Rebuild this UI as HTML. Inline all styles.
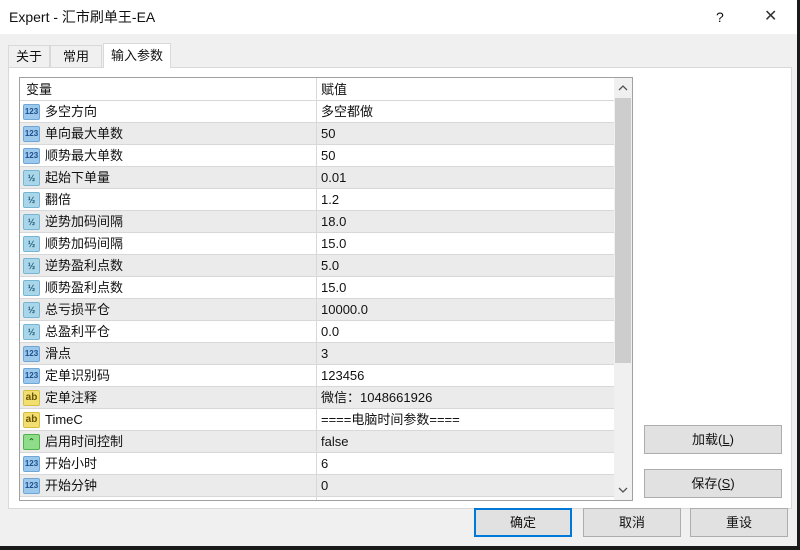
<!DOCTYPE html>
<html><head><meta charset="utf-8"><style>
*{box-sizing:border-box;margin:0;padding:0}
body{width:800px;height:550px;background:#1a1a1a;font-family:"Liberation Sans","Noto Sans CJK SC",sans-serif;font-size:13px;color:#111;position:relative;overflow:hidden}
.win{position:absolute;left:0;top:0;width:797px;height:546px;background:#f0f0f0}
.title{position:absolute;left:0;top:0;width:797px;height:34px;background:#fff}
.title span{position:absolute;top:0;line-height:34px}
.title .t{left:9px;font-size:14px}
.title .q{left:716px;font-size:14px}
.title .x{left:764px;font-size:16px;color:#333}
.tab{position:absolute;top:45px;height:22px;font-size:13px;line-height:21px;text-align:center;border:1px solid #d9d9d9;border-bottom:none;background:#f0f0f0}
.panel{position:absolute;left:8px;top:67px;width:784px;height:442px;background:#fff;border:1px solid #d9d9d9}
.list{position:absolute;left:19px;top:77px;width:614px;height:424px;border:1px solid #a0a0a0;background:#fff;overflow:hidden}
.row{position:absolute;left:0;width:594px;height:22px;border-bottom:1px solid #d8d8d8}
.row.g{background:#ebebeb}
.row span{position:absolute;top:0;line-height:21px;white-space:nowrap}
.n{left:25px}.v{left:301px}
.div{position:absolute;left:296px;top:0;width:1px;height:424px;background:#d8d8d8}
.ic{position:absolute;left:3px;top:3px;width:17px;height:16px;border-radius:2px;font-size:8px;font-weight:bold;font-style:normal;line-height:14px;text-align:center;font-family:"Liberation Sans",sans-serif}
.i1{background:#9cc8ec;color:#1d4f8c;border:1px solid #6fa6d8}
.i2{background:#a9d6e8;color:#1d5a7a;border:1px solid #76b6d2;font-size:9px}
.i3{background:#f1df72;color:#6a5200;border:1px solid #d6be3e;font-size:10px}
.i4{background:#8fdc8a;color:#1a7a1a;border:1px solid #4fb34a}
.sb{position:absolute;left:594px;top:0;width:18px;height:422px;background:#f0f0f0}
.thumb{position:absolute;left:1px;top:20px;width:16px;height:265px;background:#cdcdcd}
.btn{position:absolute;height:29px;background:#e1e1e1;border:1px solid #adadad;text-align:center;line-height:27px;font-size:13px}
</style></head><body><div class="win">
<div class="title"><span class="t">Expert - 汇市刷单王-EA</span><span class="q">?</span><span class="x">✕</span></div>
<div class="tab" style="left:8px;width:42px">关于</div>
<div class="tab" style="left:50px;width:52px">常用</div>
<div class="tab" style="left:103px;top:43px;height:25px;width:68px;background:#fff;z-index:2;line-height:24px">输入参数</div>
<div class="panel"></div>
<div class="list">
<div class="row" style="top:0;height:23px"><span style="left:6px;line-height:23px">变量</span><span class="v" style="line-height:23px">赋值</span></div>
<div class="row" style="top:23px"><i class="ic i1">123</i><span class="n">多空方向</span><span class="v">多空都做</span></div>
<div class="row g" style="top:45px"><i class="ic i1">123</i><span class="n">单向最大单数</span><span class="v">50</span></div>
<div class="row" style="top:67px"><i class="ic i1">123</i><span class="n">顺势最大单数</span><span class="v">50</span></div>
<div class="row g" style="top:89px"><i class="ic i2">½</i><span class="n">起始下单量</span><span class="v">0.01</span></div>
<div class="row" style="top:111px"><i class="ic i2">½</i><span class="n">翻倍</span><span class="v">1.2</span></div>
<div class="row g" style="top:133px"><i class="ic i2">½</i><span class="n">逆势加码间隔</span><span class="v">18.0</span></div>
<div class="row" style="top:155px"><i class="ic i2">½</i><span class="n">顺势加码间隔</span><span class="v">15.0</span></div>
<div class="row g" style="top:177px"><i class="ic i2">½</i><span class="n">逆势盈利点数</span><span class="v">5.0</span></div>
<div class="row" style="top:199px"><i class="ic i2">½</i><span class="n">顺势盈利点数</span><span class="v">15.0</span></div>
<div class="row g" style="top:221px"><i class="ic i2">½</i><span class="n">总亏损平仓</span><span class="v">10000.0</span></div>
<div class="row" style="top:243px"><i class="ic i2">½</i><span class="n">总盈利平仓</span><span class="v">0.0</span></div>
<div class="row g" style="top:265px"><i class="ic i1">123</i><span class="n">滑点</span><span class="v">3</span></div>
<div class="row" style="top:287px"><i class="ic i1">123</i><span class="n">定单识别码</span><span class="v">123456</span></div>
<div class="row g" style="top:309px"><i class="ic i3">ab</i><span class="n">定单注释</span><span class="v">微信：1048661926</span></div>
<div class="row" style="top:331px"><i class="ic i3">ab</i><span class="n">TimeC</span><span class="v">====电脑时间参数====</span></div>
<div class="row g" style="top:353px"><i class="ic i4">⌃</i><span class="n">启用时间控制</span><span class="v">false</span></div>
<div class="row" style="top:375px"><i class="ic i1">123</i><span class="n">开始小时</span><span class="v">6</span></div>
<div class="row g" style="top:397px"><i class="ic i1">123</i><span class="n">开始分钟</span><span class="v">0</span></div>
<div class="div"></div>
<div class="sb"><svg style="position:absolute;left:4px;top:6px" width="10" height="8"><path d="M1 6 L5 2 L9 6" stroke="#555" stroke-width="1.3" fill="none"/></svg><div class="thumb"></div><svg style="position:absolute;left:4px;top:408px" width="10" height="8"><path d="M1 2 L5 6 L9 2" stroke="#555" stroke-width="1.3" fill="none"/></svg></div>
</div>
<div class="btn" style="left:644px;top:425px;width:138px">加载(<u>L</u>)</div>
<div class="btn" style="left:644px;top:469px;width:138px">保存(<u>S</u>)</div>
<div class="btn" style="left:474px;top:508px;width:98px;border:2px solid #0078d7;line-height:25px">确定</div>
<div class="btn" style="left:583px;top:508px;width:98px">取消</div>
<div class="btn" style="left:690px;top:508px;width:98px">重设</div>
</div></body></html>
